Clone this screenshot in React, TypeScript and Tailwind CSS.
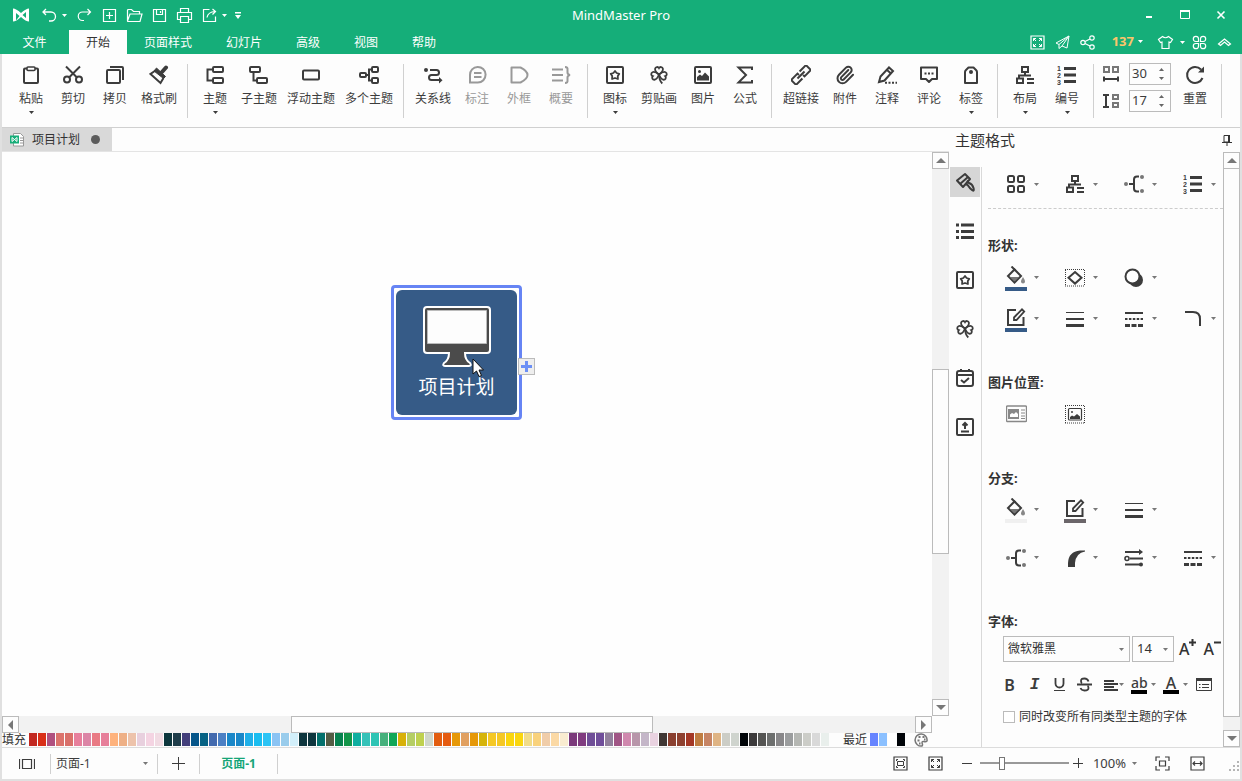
import React, { useState } from 'react';
import { Paperclip } from 'lucide-react';

type DrawProps = { children?: React.ReactNode; size?: number; sw?: number; className?: string };

function Svg({ children, size = 20, sw = 2, className = '' }: DrawProps) {
  return (
    <svg
      width={size}
      height={size}
      viewBox={`0 0 ${size} ${size}`}
      fill="none"
      stroke="currentColor"
      strokeWidth={sw}
      className={`shrink-0 ${className}`}
      aria-hidden="true"
    >
      {children}
    </svg>
  );
}

function Caret({ className = '' }: { className?: string }) {
  return (
    <svg width="5" height="3" viewBox="0 0 5 3" fill="currentColor" className={`shrink-0 ${className}`} aria-hidden="true">
      <path d="M0 0h5L2.5 3z" />
    </svg>
  );
}

/* Icons shared by the ribbon and the side panel */
const StarBox = () => (
  <Svg>
    <rect x="2" y="2" width="16" height="16" rx="1" />
    <path d="M10 6l1.600 2 2.700.8-1.500 2.300.1 2.900-2.900-1-2.900 1 .1-2.900-1.500-2.300 2.700-.8z" strokeWidth="1.8" strokeLinejoin="round" />
  </Svg>
);

const leaf = 'M10 9.5C7.5 7.6 5.8 5.5 6.1 3.8 6.5 1.8 9 1.4 10 3.1 11 1.4 13.5 1.8 13.9 3.8 14.2 5.5 12.5 7.6 10 9.5z';
const Clover = () => (
  <Svg sw={1.8}>
    <path d={leaf} />
    <path d={leaf} transform="rotate(-105 10 9.5)" />
    <path d={leaf} transform="rotate(105 10 9.5)" />
    <path d="M10 9.5c0 4 .7 6.5 3.3 9" />
  </Svg>
);

const Layout = () => (
  <Svg>
    <rect x="7" y="2" width="6" height="5" />
    <path d="M10 7v3M4 14v-3.5h12" />
    <rect x="2" y="13.5" width="6" height="4.5" />
    <path d="M12 14h7M12 18h7" />
  </Svg>
);

const Numbering = () => (
  <Svg sw={3}>
    <path d="M7 3.5h12M7 10h12M7 16.5h12" />
    <g fill="currentColor" stroke="none" fontSize="7" fontWeight="700" fontFamily="Liberation Sans, sans-serif">
      <text x="0" y="6">1</text>
      <text x="0" y="13">2</text>
      <text x="0" y="20">3</text>
    </g>
  </Svg>
);

const Lines = () => (
  <Svg>
    <path d="M1 3.5h18" strokeWidth="1" />
    <path d="M1 10h18" />
    <path d="M1 16.5h18" strokeWidth="3" />
  </Svg>
);

const Dashes = () => (
  <Svg>
    <path d="M1 4h18" />
    <path d="M1 10h18" strokeDasharray="2.5 1.4" />
    <path d="M1 16.5h18" strokeWidth="3" strokeDasharray="5 1.5" />
  </Svg>
);

const Branch = () => (
  <Svg>
    <path d="M5 10h5M15 2.5h-2q-3 0-3 3v9q0 3 3 3h2" />
    <g fill="#777" stroke="none">
      <circle cx="2" cy="10" r="2" />
      <circle cx="18" cy="3" r="2" />
      <circle cx="18" cy="17" r="2" />
    </g>
  </Svg>
);

const Bucket = () => (
  <Svg>
    <path d="M5.5 .5l4 4" />
    <path d="M8.5 3.5L15 10l-6.5 6.5L2 10z" />
    <path d="M4 11h9l-4.5 4.5z" fill="#777" stroke="none" />
    <path d="M17 11q2 3 2 4.5a2 2 0 0 1-4 0q0-1.5 2-4.5z" fill="#888" stroke="none" />
  </Svg>
);

const EditPen = () => (
  <Svg>
    <path d="M10 3H2v15h15.5v-8" />
    <path d="M8 10.5L16 2.3l2.2 2.2L10.5 13H8z" strokeWidth="1.8" />
  </Svg>
);

const ribbon = {
  paste: (
    <Svg>
      <rect x="3" y="3.5" width="14" height="14.5" rx="1" />
      <rect x="6" y="2" width="8" height="3.5" rx="1" fill="white" strokeWidth="1.6" />
    </Svg>
  ),
  cut: (
    <Svg>
      <circle cx="4" cy="14.5" r="3" />
      <circle cx="16" cy="14.5" r="3" />
      <path d="M3 1.5L14 12.5M17 1.5L6 12.5" />
    </Svg>
  ),
  copy: (
    <Svg>
      <rect x="2" y="5" width="13" height="13" rx="1" />
      <path d="M5 2h12q1 0 1 1v12" />
    </Svg>
  ),
  brush: (
    <Svg>
      <path d="M13 7l4-4.5" strokeWidth="4" strokeLinecap="round" />
      <path d="M7.5 3l9 8.500-2 2L5 6z" fill="currentColor" strokeWidth="1" />
      <path d="M6.5 5.5L1.5 9l10 9 3-5" />
    </Svg>
  ),
  topic: (
    <Svg>
      <rect x="8" y="2" width="10" height="5" rx="1" />
      <rect x="8" y="13" width="10" height="5" rx="1" />
      <path d="M8 4.5H2.5v11H8" />
    </Svg>
  ),
  subtopic: (
    <Svg>
      <rect x="1" y="2" width="10" height="5" rx="1" />
      <rect x="8" y="13" width="10" height="5" rx="1" />
      <path d="M4.5 7v8.5H8" />
    </Svg>
  ),
  floating: (
    <Svg>
      <rect x="2" y="5.5" width="16" height="9" rx="1" />
    </Svg>
  ),
  multi: (
    <Svg>
      <rect x="1" y="8" width="6" height="4" rx="1" />
      <rect x="13" y="2" width="6" height="5" rx="1" />
      <rect x="13" y="13" width="6" height="5" rx="1" />
      <path d="M7 10h3M13 4.5h-3v11h3" />
    </Svg>
  ),
  relation: (
    <Svg>
      <circle cx="3" cy="5" r="2" fill="currentColor" stroke="none" />
      <path d="M7 5h6.5a2.5 2.5 0 0 1 0 5H8.5a2.5 2.5 0 0 0 0 5H16" />
      <path d="M16 12l3.5 3.2L16 18.4z" fill="currentColor" stroke="none" />
    </Svg>
  ),
  callout: (
    <Svg>
      <path d="M3 17.5V10a7.8 7.8 0 1 1 7.8 7.5z" />
      <path d="M7 8h7.5M7 12h7.5" />
    </Svg>
  ),
  boundary: (
    <Svg>
      <path d="M2.5 2.5h9q7 3.5 7 7.5t-7 7.5h-9z" strokeLinejoin="round" />
    </Svg>
  ),
  summary: (
    <Svg>
      <path d="M1 4.5h11M1 10h11M1 15.5h11" />
      <path d="M14 2q3 0 2.5 3v2.5q0 2 2.5 2.5-2.5.5-2.5 2.5v2.5q.5 3-2.5 3" />
    </Svg>
  ),
  picture: (
    <Svg>
      <rect x="2" y="2" width="16" height="16" rx="1" />
      <circle cx="6.5" cy="6.5" r="1.5" fill="currentColor" stroke="none" />
      <path d="M4 15.5V12l3-2.5 2 1.500 3-3.500 4 4v4z" fill="currentColor" stroke="none" />
    </Svg>
  ),
  formula: (
    <Svg>
      <path d="M17 5V2.5H3.5L11 10l-7.5 7.5H17V15" />
    </Svg>
  ),
  link: (
    <Svg>
      <g transform="rotate(-45 10 10)">
        <path d="M8.5 8.500v-2H-.5v7h9M11.5 11.500v2h9v-7h-9M5 10h10" />
      </g>
    </Svg>
  ),
  attach: <Paperclip size={20} strokeWidth={2.4} aria-hidden="true" />,
  note: (
    <Svg>
      <path d="M2 17l1.5-5.5L12 2.5l4 3.5-8.500 9.500zM10 5l4 3.500" />
      <path d="M8 17.8h12" strokeDasharray="2 1.5" />
    </Svg>
  ),
  comment: (
    <Svg>
      <path d="M2 2.5h16V14h-5l-3 3-3-3H2z" strokeLinejoin="round" />
      <path d="M5.5 8.5h9" strokeDasharray="2 1.5" />
    </Svg>
  ),
  tag: (
    <Svg>
      <path d="M4 18V7q0-1 1-2l2.5-2.5h5L15 5q1 1 1 2v11z" strokeLinejoin="round" />
      <circle cx="10" cy="7" r="2" fill="currentColor" stroke="none" />
    </Svg>
  ),
};

type Tool = { label: string; icon: React.ReactNode; caret?: boolean; off?: boolean };

const groups: Tool[][] = [
  [
    { label: '粘贴', icon: ribbon.paste, caret: true },
    { label: '剪切', icon: ribbon.cut },
    { label: '拷贝', icon: ribbon.copy },
    { label: '格式刷', icon: ribbon.brush },
  ],
  [
    { label: '主题', icon: ribbon.topic, caret: true },
    { label: '子主题', icon: ribbon.subtopic },
    { label: '浮动主题', icon: ribbon.floating },
    { label: '多个主题', icon: ribbon.multi },
  ],
  [
    { label: '关系线', icon: ribbon.relation },
    { label: '标注', icon: ribbon.callout, off: true },
    { label: '外框', icon: ribbon.boundary, off: true },
    { label: '概要', icon: ribbon.summary, off: true },
  ],
  [
    { label: '图标', icon: <StarBox />, caret: true },
    { label: '剪贴画', icon: <Clover /> },
    { label: '图片', icon: ribbon.picture },
    { label: '公式', icon: ribbon.formula },
  ],
  [
    { label: '超链接', icon: ribbon.link },
    { label: '附件', icon: ribbon.attach },
    { label: '注释', icon: ribbon.note },
    { label: '评论', icon: ribbon.comment },
    { label: '标签', icon: ribbon.tag, caret: true },
  ],
  [
    { label: '布局', icon: <Layout />, caret: true },
    { label: '编号', icon: <Numbering />, caret: true },
  ],
];

const toolWidth: Record<number, string> = { 2: 'w-[42px]', 3: 'w-[46px]', 4: 'w-[58px]' };

function RibbonButton({ label, icon, caret, off }: Tool) {
  return (
    <button
      disabled={off}
      className={`flex shrink-0 flex-col items-center pt-[11px] ${toolWidth[label.length]} ${off ? 'text-[#999]' : 'text-[#3c3c3c]'}`}
    >
      {icon}
      <span className="mt-1 text-xs leading-5 whitespace-nowrap">{label}</span>
      {caret && <Caret className="mt-0.5" />}
    </button>
  );
}

const Divider = () => <div className="mt-2.5 mr-1.5 ml-[5px] h-[54px] w-px shrink-0 bg-[#d0d0d0]" />;

function Spinner({ label, value, children }: { label: string; value: number; children: React.ReactNode }) {
  return (
    <label className="flex items-center gap-2.5">
      {children}
      <span className="flex h-[22px] w-[42px] items-center border border-[#bbb] pr-1.5">
        <input
          type="number"
          aria-label={label}
          defaultValue={value}
          className="w-full min-w-0 [appearance:textfield] pl-0.5 text-[13px] outline-none [&::-webkit-inner-spin-button]:appearance-none"
        />
        <span className="flex flex-col gap-1.5 text-[#666]">
          <Caret className="rotate-180" />
          <Caret />
        </span>
      </span>
    </label>
  );
}

function TitleBar() {
  const quick = [
    { name: '重做', draw: <path d="M11.5 2l3 3-3 3M14 5H6.5a4 4 0 0 0 0 8.5H8" /> },
    { name: '新建', draw: <path d="M2.5 2.5h12v12h-12zM8.5 5v7M5 8.5h7" /> },
    { name: '打开', draw: <path d="M1.5 14V3.5q0-1 1-1h3l2 2h6V7M1.5 14L4 7h12l-2 7.5H2.5q-1 0-1-.5" /> },
    { name: '保存', draw: <path d="M2.5 2.5h12v12h-12zM5.5 2.5v5h6v-5M9.5 4v2" /> },
    { name: '打印', draw: <path d="M4.5 5.5v-4h8v4M4.5 12.5h-3v-7h14v7h-3M4.5 9.5h8v6h-8z" /> },
    { name: '导出', draw: <path d="M8.5 2.5h-6v12h12v-5M6 10.5Q7 5 14 4.5M11.5 2l3 2.500-3 3" /> },
  ];
  return (
    <div className="grid h-[30px] grid-cols-[1fr_auto_1fr] items-center">
      <div className="flex items-center pl-[13px]">
        <svg width="16" height="14" viewBox="0 0 16 14" fill="currentColor" aria-hidden="true">
          <path d="M0 .5Q3 .5 8 5 13 .5 16 .5v13q-3 0-8-4.500Q3 13.500 0 13.500z" />
          <path d="M3 5v7.500l3.500-4.500zM13 4v6l-3.500-3z" fill="#15ae79" />
        </svg>
        <button className="ml-2 flex w-6 justify-center" aria-label="撤销">
          <Svg size={17} sw={1.3}>
            <path d="M5 2L2 5l3 3M2.5 5H10a4.5 4.5 0 0 1 0 9H8" />
          </Svg>
        </button>
        <Caret className="mr-[5px] ml-px" />
        {quick.map((q) => (
          <button key={q.name} className="flex w-[25px] justify-center" aria-label={q.name}>
            <Svg size={17} sw={1.2}>{q.draw}</Svg>
          </button>
        ))}
        <Caret />
        <svg width="6" height="7" viewBox="0 0 6 7" fill="currentColor" className="ml-2" aria-hidden="true">
          <path d="M0 0h6v1.5H0zM0 3h6L3 7z" />
        </svg>
      </div>
      <h1 className="pt-0.5 text-[13px]">MindMaster Pro</h1>
      <div className="flex justify-end pr-[3px]">
        <button className="flex w-9 justify-center" aria-label="最小化">
          <Svg size={12}><path d="M3 8h6" /></Svg>
        </button>
        <button className="flex w-9 justify-center" aria-label="最大化">
          <Svg size={12} sw={1}>
            <path d="M1.5 2v7.5h9V2" />
            <path d="M1 2h10" strokeWidth="2" />
          </Svg>
        </button>
        <button className="flex w-9 justify-center" aria-label="关闭">
          <Svg size={12} sw={1.6}><path d="M2.5 2.5l7 7M9.5 2.5l-7 7" /></Svg>
        </button>
      </div>
    </div>
  );
}

function MenuBar() {
  const [active, setActive] = useState('开始');
  const tabs = ['开始', '页面样式', '幻灯片', '高级', '视图', '帮助'];
  return (
    <div className="flex h-6 items-stretch justify-between text-xs">
      <nav className="flex items-stretch">
        <button className="w-[69px] pt-0.5">文件</button>
        {tabs.map((tab) => (
          <button
            key={tab}
            onClick={() => setActive(tab)}
            className={`px-[17px] pt-0.5 ${tab === active ? 'bg-[#fdfdfd] text-[#333]' : ''}`}
          >
            {tab}
          </button>
        ))}
      </nav>
      <div className="flex items-center pr-[5px]">
        <button className="flex w-[25px] justify-center" aria-label="全屏">
          <Svg size={15} sw={1.2}>
            <path d="M1 1h13v13H1z" />
            <path d="M3.5 6V3.5H6M3.5 3.5L6 6M9 3.5h2.5V6M11.5 3.5L9 6M3.5 9v2.5H6M3.5 11.5L6 9M9 11.5h2.5V9M11.5 11.5L9 9" strokeWidth="1" />
          </Svg>
        </button>
        <button className="flex w-[25px] justify-center" aria-label="发送">
          <Svg size={15} sw={1}>
            <path d="M14 1L1 8l3 1.5v4L7 11M14 1L4 9.5M14 1l-2 12-5-2L14 1" />
          </Svg>
        </button>
        <button className="flex w-[25px] justify-center" aria-label="分享">
          <Svg size={15} sw={1.2}>
            <circle cx="3" cy="7.5" r="2.2" />
            <circle cx="12" cy="3" r="2.2" />
            <circle cx="12" cy="12" r="2.2" />
            <path d="M5 6.5L10 4M5 8.5l5 2.500" />
          </Svg>
        </button>
        <button className="ml-3 flex items-center gap-1 text-[13px] font-bold text-[#fbc56b]">
          137 <Caret className="text-white" />
        </button>
        <button className="ml-3.5 flex items-center gap-1.5" aria-label="主题皮肤">
          <Svg size={17} sw={1.2}>
            <path d="M5.5 2.5q3 2.5 6 0l4 3-2 3-1.500-.5v6.500H5V8l-1.500.5-2-3z" />
          </Svg>
          <Caret />
        </button>
        <button className="ml-0.5 flex w-[25px] justify-center" aria-label="应用">
          <Svg size={15} sw={1.2}>
            <path d="M6.5 6.5H3.8a2.6 2.6 0 1 1 2.7-2.7zM8.5 6.5h2.7a2.6 2.6 0 1 0-2.7-2.7zM6.5 8.5H3.8a2.6 2.6 0 1 0 2.7 2.7zM8.5 8.5h2.7a2.6 2.6 0 1 1-2.7 2.7z" />
          </Svg>
        </button>
        <button className="flex w-[25px] justify-center" aria-label="收起功能区">
          <Svg size={15} sw={1.2}>
            <path d="M1.5 9l6-5 6 5-2 1.5-4-3.500-4 3.500z" />
          </Svg>
        </button>
      </div>
    </div>
  );
}

function Ribbon() {
  return (
    <section className="flex h-[74px] items-start overflow-hidden border-b border-[#d0d0d0] pl-2 text-[#3c3c3c]">
      {groups.map((group, i) => (
        <React.Fragment key={i}>
          {i > 0 && <Divider />}
          {group.map((tool) => (
            <RibbonButton key={tool.label} {...tool} />
          ))}
        </React.Fragment>
      ))}
      <Divider />
      <div className="flex flex-col gap-[5px] pt-[9px] pl-[3px]">
        <Spinner label="水平间距" value={30}>
          <Svg size={16}>
            <path d="M1 1h5v5H1zM10 1h5v5h-5z" stroke="#777" />
            <path d="M0 13h16M1 10.5v5M15 10.5v5" />
          </Svg>
        </Spinner>
        <Spinner label="垂直间距" value={17}>
          <Svg size={16}>
            <path d="M3 2v12M0 2h6M0 14h6" />
            <path d="M10 2h5v4h-5zM10 10h5v4h-5z" stroke="#777" />
          </Svg>
        </Spinner>
      </div>
      <button className="ml-[3px] flex w-[42px] flex-col items-center pt-[11px]">
        <Svg>
          <path d="M16 4.5A8 8 0 1 0 17.5 13" />
          <path d="M19 1.5v6h-6z" fill="currentColor" stroke="none" />
        </Svg>
        <span className="mt-1 text-xs leading-5">重置</span>
      </button>
      <Divider />
    </section>
  );
}

const scrollArrow = {
  up: 'M0 5h10L5 0z',
  down: 'M0 0h10L5 5z',
  left: 'M5 0v10L0 5z',
  right: 'M0 0v10l5-5z',
};

function ScrollButton({ dir }: { dir: keyof typeof scrollArrow }) {
  const flat = dir === 'up' || dir === 'down';
  return (
    <button aria-label={`scroll ${dir}`} className="flex size-[17px] shrink-0 items-center justify-center border border-[#bbb] bg-[#fdfdfd] text-[#777]">
      <svg width={flat ? 10 : 5} height={flat ? 5 : 10} fill="currentColor" aria-hidden="true">
        <path d={scrollArrow[dir]} />
      </svg>
    </button>
  );
}

function MapNode() {
  return (
    <div className="absolute top-[133px] left-[389px] rounded border-[3px] border-[#6684f4] bg-white p-0.5">
      <div className="flex h-[125px] w-[121px] flex-col items-center rounded-md bg-[#365b87] pt-[15px] text-white">
        <svg width="70" height="64" viewBox="0 0 70 64" aria-hidden="true">
          <path
            d="M5 2h60q3 0 3 3v40q0 3-3 3H43q0 7 5 10 2 3-1 3H23q-3 0-1-3 5-3 5-10H5q-3 0-3-3V5q0-3 3-3z"
            fill="#4b4b4b"
            stroke="white"
            strokeWidth="2"
          />
          <path d="M5.5 5.5h59v33h-59z" fill="#fdfdfd" stroke="#bbb" />
        </svg>
        <span className="mt-1 text-[19px] leading-7">项目计划</span>
      </div>
      <button
        aria-label="添加子主题"
        className="absolute top-[70px] -right-4 flex size-[17px] items-center justify-center border border-[#bbb] bg-[#eee] text-[#6b8ff5]"
      >
        <Svg size={11} sw={3}>
          <path d="M5.5 0v11M0 5.5h11" />
        </Svg>
      </button>
      <svg width="13" height="20" viewBox="0 0 13 20" className="absolute top-[70px] left-[78px]" aria-hidden="true">
        <path d="M1 1v15l3.5-3 2.500 5.500 2.500-1L7 12h4.500z" fill="white" stroke="#111" />
      </svg>
    </div>
  );
}

const swatches = [
  '#c22820', '#d92f18', '#b0507f', '#dc736c', '#d9706a', '#e77f9c', '#dc85a6', '#e97a84', '#e77f9a', '#feb27c',
  '#eeb086', '#edc3ab', '#e8d0de', '#f4d4e2', '#f1dbe3', '#0d363d', '#1f3d4a', '#433f7b', '#06568a', '#066284',
  '#436aae', '#4c80c4', '#1a87c8', '#1a87c8', '#1fb0e9', '#19bdf0', '#2cc4f5', '#8bc4f4', '#99ccec', '#d2effa',
  '#0e363e', '#0e363e', '#03706c', '#535c44', '#07824f', '#129549', '#0faea0', '#35c2b8', '#2dc4b4', '#46b07c',
  '#10a657', '#d8b109', '#b5ce64', '#bfd14f', '#d0d7ca', '#e25d10', '#e55b10', '#e69808', '#e1a060', '#e69808',
  '#d6b40a', '#f5c825', '#f5c825', '#fad60e', '#fad60e', '#f1dc88', '#f9d27c', '#f0cda9', '#fbd9a5', '#f9ecd0',
  '#7b3a7b', '#803c80', '#6f4e97', '#704e9a', '#92809c', '#a05585', '#d088ae', '#b896aa', '#c4b6c8', '#e9d2e0',
  '#403734', '#8b4030', '#8f4130', '#a43826', '#bf7d42', '#c68464', '#dfb484', '#cccdc6', '#cfd4ce', '#000408',
  '#3c3a3b', '#555553', '#6d6f6e', '#888789', '#9b9d9e', '#b5b7b3', '#cccdc8', '#d9d9d9', '#e9efec',
];

function ColorBar() {
  return (
    <div className="flex h-3.5 items-start text-xs leading-[14px] text-[#333]">
      <span className="mr-[3px] shrink-0">填充</span>
      <div className="flex shrink-0 gap-px">
        {swatches.map((color, i) => (
          <button key={i} aria-label={color} className="h-[13px] w-2" style={{ backgroundColor: color }} />
        ))}
      </div>
      <span className="mr-[3px] ml-3.5 shrink-0">最近</span>
      <div className="flex shrink-0 gap-px">
        {['#6684ff', '#8bc0ff', '#ffffff', '#000408'].map((color) => (
          <button key={color} aria-label={color} className="h-[13px] w-2" style={{ backgroundColor: color }} />
        ))}
      </div>
      <button className="ml-[9px] text-[#777]" aria-label="更多颜色">
        <Svg size={14} sw={1.5}>
          <path d="M8 13a6 6 0 1 1 5-5q-1 1-3 .5T8 10q1 2 0 3z" />
          <path d="M3.5 7.5h2M4.5 4h2M8.5 4h2M10 6.5h1.5M5 10.5h1.5" strokeWidth="2" />
        </Svg>
      </button>
    </div>
  );
}

function Workspace() {
  return (
    <main className="flex min-w-0 flex-1 flex-col">
      <div className="flex h-6 items-stretch border-b border-[#e4e4e4]">
        <button className="flex items-center bg-[#d9d9d9] pr-3 pl-2 text-xs text-[#333]">
          <svg width="14" height="15" viewBox="0 0 14 15" aria-hidden="true">
            <path d="M3.5 1.5h7l3 3V14h-10z" fill="white" stroke="#999" />
            <path d="M10 6h3M10 8.5h3M10 11h3" stroke="#999" />
            <path d="M0 3.5h9v8H0z" fill="#15ae79" />
            <path d="M2 5.5v4l2.5-2 2.500 2v-4l-2.500 2z" fill="none" stroke="white" />
          </svg>
          <span className="ml-2">项目计划</span>
          <span className="ml-[11px] size-[9px] rounded-full bg-[#5c5c5c]" />
        </button>
      </div>
      <div className="flex flex-1">
        <div className="flex min-w-0 flex-1 flex-col">
          <div className="relative flex-1 overflow-hidden bg-[#fefefe]">
            <MapNode />
          </div>
          <div className="flex h-[17px] bg-[#f2f2f2]">
            <ScrollButton dir="left" />
            <div className="flex-[272]" />
            <div className="flex-[360] border border-[#bbb] bg-[#fdfdfd]" />
            <div className="flex-[262]" />
            <ScrollButton dir="right" />
          </div>
        </div>
        <div className="flex w-[17px] flex-col bg-[#f2f2f2]">
          <ScrollButton dir="up" />
          <div className="flex-[201]" />
          <div className="flex-[183] border border-[#bbb] bg-[#fdfdfd]" />
          <div className="flex-[146]" />
          <ScrollButton dir="down" />
          <div className="h-[17px] bg-[#fdfdfd]" />
        </div>
      </div>
      <ColorBar />
    </main>
  );
}

function Option({ name, children, caret = true, bar }: { name: string; children: React.ReactNode; caret?: boolean; bar?: string }) {
  return (
    <button aria-label={name} className="flex w-[59px] shrink-0 items-center gap-[5px] text-[#3c3c3c]">
      <span className={`flex w-[26px] flex-col items-center ${bar ? 'pt-0.5' : ''}`}>
        {children}
        {bar && <span className={`mt-px h-1 w-[22px] ${bar}`} />}
      </span>
      {caret && <Caret className="text-[#777]" />}
    </button>
  );
}

const row = 'ml-[15px] flex h-[41px] items-center';
const heading = 'h-5 text-[13px] leading-5 font-bold text-[#333]';

const sideIcons = [
  {
    name: '主题格式',
    icon: (
      <Svg>
        <path d="M10 2l5 5-7 8-6-6.5z" strokeLinejoin="round" />
        <path d="M5 12l8-7M13 8.5q-1 2 1 2.5 3.5 1 4.5 5t-1.500 2-4-4.500q-1-1.500-2.500-.5" />
      </Svg>
    ),
  },
  {
    name: '大纲',
    icon: (
      <Svg sw={3}>
        <path d="M6 4h13M6 10.5h13M6 16.5h13M1 4h3M1 10.5h3M1 16.5h3" />
      </Svg>
    ),
  },
  { name: '图标', icon: <StarBox /> },
  { name: '剪贴画', icon: <Clover /> },
  {
    name: '任务',
    icon: (
      <Svg>
        <rect x="2" y="3" width="16" height="15" rx="2" />
        <path d="M2 7h16M6 1v3M14 1v3M6 12l3 2.5 5-4.500" />
      </Svg>
    ),
  },
  {
    name: '导出',
    icon: (
      <Svg>
        <rect x="2" y="2" width="16" height="16" rx="1" />
        <path d="M6 14.5h8M10 12V7M7.5 8.5L10 6l2.5 2.5" />
      </Svg>
    ),
  },
];

function FontControls() {
  return (
    <>
      <div className="mt-[5px] ml-[15px] flex items-center gap-0.5">
        <span className="relative flex h-[26px] w-[127px] shrink-0 items-center border border-[#bbb]">
          <select aria-label="字体" className="w-full appearance-none pl-1 text-xs outline-none">
            <option>微软雅黑</option>
          </select>
          <Caret className="pointer-events-none absolute right-[5px] text-[#777]" />
        </span>
        <span className="relative flex h-[26px] w-[42px] shrink-0 items-center border border-[#bbb]">
          <select aria-label="字号" className="w-full appearance-none pl-1 text-[13px] outline-none">
            <option>14</option>
          </select>
          <Caret className="pointer-events-none absolute right-[5px] text-[#777]" />
        </span>
        <button aria-label="增大字号" className="ml-[3px] flex text-base leading-5 font-medium">
          A<Svg size={7}><path d="M3.5 0v7M0 3.5h7" /></Svg>
        </button>
        <button aria-label="减小字号" className="ml-[5px] flex text-base leading-5 font-medium">
          A<Svg size={7}><path d="M0 3.5h7" /></Svg>
        </button>
      </div>
      <div className="ml-[15px] flex h-[45px] items-center text-[#3c3c3c]">
        <button className="w-[13px] text-base font-semibold">B</button>
        <button className="ml-3 w-[13px] font-mono text-base font-bold italic">I</button>
        <button className="ml-3 flex w-[13px] justify-center" aria-label="下划线">
          <Svg size={13} sw={1.8}>
            <path d="M2.5 0v5.5a4 4 0 0 0 8 0V0" />
            <path d="M1 12.5h11" strokeWidth="1" />
          </Svg>
        </button>
        <button className="ml-[11px] flex w-[15px] justify-center" aria-label="删除线">
          <Svg size={15} sw={1.8}>
            <path d="M11.5 4.5q-1-3-4-3Q4 1.5 4 4q0 1.500 1 2M3.5 11q1 2.500 4 2.500 4 0 4-2.500 0-1.500-1-2M0 7.500h15" />
          </Svg>
        </button>
        <button className="ml-3 flex items-center gap-px" aria-label="对齐">
          <Svg size={14}><path d="M0 3h10M0 6h14M0 9h10M0 12h14" /></Svg>
          <Caret className="text-[#777]" />
        </button>
        <button className="ml-[7px] flex items-center gap-1" aria-label="突出显示">
          <span className="w-4 border-b-4 border-black text-sm leading-[14px] font-medium">ab</span>
          <Caret className="text-[#777]" />
        </button>
        <button className="ml-[7px] flex items-center gap-1" aria-label="字体颜色">
          <span className="w-4 border-b-4 border-black text-base leading-[14px] font-medium">A</span>
          <Caret className="text-[#777]" />
        </button>
        <button className="ml-2" aria-label="更多字体设置">
          <Svg size={16} sw={1}>
            <path d="M.5 2.5h15v11H.5z" />
            <path d="M0 2.500h16" strokeWidth="3" />
            <path d="M3 7.5h1.5M6 7.5h7M3 10.5h1.5M6 10.5h7" />
          </Svg>
        </button>
      </div>
      <label className="ml-[15px] flex h-5 items-center gap-1 text-xs whitespace-nowrap">
        <input type="checkbox" className="size-3 appearance-none border border-[#bbb] bg-white checked:bg-[#15ae79]" />
        同时改变所有同类型主题的字体
      </label>
    </>
  );
}

function FormatPanel() {
  return (
    <aside className="flex w-[291px] shrink-0 flex-col text-[#333]">
      <header className="flex h-6 items-center justify-between pr-2 pl-1.5">
        <h2 className="text-[15px]">主题格式</h2>
        <button aria-label="固定面板">
          <Svg size={11} sw={1}>
            <path d="M3 .5h5.5V7H3zM1 7.5h10M6 8v3" />
            <path d="M8 0v7" strokeWidth="2" />
          </Svg>
        </button>
      </header>
      <div className="flex flex-1">
        <nav className="flex w-8 shrink-0 flex-col gap-[19px] pt-[15px] pl-px">
          {sideIcons.map((item, i) => (
            <button
              key={item.name}
              aria-label={item.name}
              className={`flex size-[30px] items-center justify-center text-[#3c3c3c] ${i === 0 ? 'bg-[#d6d6d6]' : ''}`}
            >
              {item.icon}
            </button>
          ))}
        </nav>
        <div className="mt-[15px] w-px bg-[#d9d9d9]" />
        <div className="min-w-0 flex-1 overflow-hidden pl-1.5">
          <div className="mt-2 flex h-12 items-center pl-[15px]">
            <Option name="主题样式">
              <Svg>
                <rect x="2" y="2" width="6" height="6" rx="1.5" />
                <rect x="12" y="2" width="6" height="6" rx="1.5" />
                <rect x="2" y="12" width="6" height="6" rx="1.5" />
                <rect x="12" y="12" width="6" height="6" rx="1.5" />
              </Svg>
            </Option>
            <Option name="布局"><Layout /></Option>
            <Option name="连接"><Branch /></Option>
            <Option name="编号"><Numbering /></Option>
          </div>
          <div className="border-t border-dashed border-[#ccc]" />
          <h3 className={`mt-[26px] ${heading}`}>形状:</h3>
          <div className={`mt-0.5 ${row}`}>
            <Option name="填充颜色" bar="bg-[#365b87]"><Bucket /></Option>
            <Option name="形状">
              <Svg>
                <path d="M0 1.5h20M0 18h20M.5 2v16M19.5 2v16" strokeWidth="1" strokeDasharray="1 1" />
                <path d="M10 4l6.5 5.8-6.500 5.800-6.500-5.800z" />
              </Svg>
            </Option>
            <Option name="阴影">
              <Svg>
                <circle cx="12" cy="12" r="7" fill="currentColor" stroke="none" />
                <circle cx="8.5" cy="8.5" r="7" fill="white" />
              </Svg>
            </Option>
          </div>
          <div className={row}>
            <Option name="线条颜色" bar="bg-[#365b87]"><EditPen /></Option>
            <Option name="线宽"><Lines /></Option>
            <Option name="线型"><Dashes /></Option>
            <Option name="圆角">
              <Svg><path d="M2 3h8q7 0 7 7v7" /></Svg>
            </Option>
          </div>
          <h3 className={`mt-[33px] ${heading}`}>图片位置:</h3>
          <div className={`mt-px ${row}`}>
            <Option name="图片居左" caret={false}>
              <svg width="21" height="18" viewBox="0 0 21 18" fill="none" stroke="#888" aria-hidden="true">
                <rect x=".5" y="1" width="20" height="15.5" rx="1" strokeWidth="1.4" />
                <path d="M2 4h11v10H2z" fill="#888" stroke="none" />
                <path d="M4 12V9.5L6 8l2 1 2-2 2 2v3z" fill="white" stroke="none" />
                <path d="M15 5h4M15 8h4M15 11h4M15 13.5h4" />
              </svg>
            </Option>
            <Option name="图片居中" caret={false}>
              <Svg>
                <path d="M0 1.5h20M0 19h20M.5 2v17M19.5 2v17" strokeWidth="1" strokeDasharray="1 1" />
                <rect x="3.5" y="4.5" width="13" height="11.5" rx="1" strokeWidth="1.2" />
                <path d="M5 15v-2l2-1.5 2 1 3-2.500 3 2.500V15z" fill="currentColor" stroke="none" />
                <circle cx="7" cy="8" r="1" fill="currentColor" stroke="none" />
              </Svg>
            </Option>
          </div>
          <h3 className={`mt-[34px] ${heading}`}>分支:</h3>
          <div className={`mt-px ${row}`}>
            <Option name="分支填充" bar="bg-[#f0f0f0]"><Bucket /></Option>
            <Option name="分支颜色" bar="bg-[#6b666a]"><EditPen /></Option>
            <Option name="分支线宽"><Lines /></Option>
          </div>
          <div className={`mt-[7px] ${row}`}>
            <Option name="连接线样式"><Branch /></Option>
            <Option name="线条粗细">
              <Svg>
                <path d="M3 19v-4Q3.5 3.500 15 2.500h5v1Q11 5 10 15v4z" fill="currentColor" stroke="none" />
              </Svg>
            </Option>
            <Option name="箭头">
              <Svg>
                <path d="M1 4h16M6 10.5h13M1 16.5h15" />
                <circle cx="3" cy="10.5" r="2" strokeWidth="1.6" />
                <path d="M15 1l4 3-4 3z" fill="currentColor" stroke="none" />
                <circle cx="17" cy="16.5" r="2" fill="currentColor" stroke="none" />
              </Svg>
            </Option>
            <Option name="分支线型"><Dashes /></Option>
          </div>
          <h3 className={`mt-[33px] ${heading}`}>字体:</h3>
          <FontControls />
        </div>
        <div className="flex w-[17px] shrink-0 flex-col bg-[#f2f2f2]">
          <ScrollButton dir="up" />
          <div className="flex-[548] border border-t-0 border-[#bbb] bg-[#fdfdfd]" />
          <div className="flex-[13]" />
          <ScrollButton dir="down" />
        </div>
      </div>
    </aside>
  );
}

function StatusBar() {
  const bar = 'h-5 w-px bg-[#d0d0d0]';
  return (
    <footer className="flex h-8 items-center border-t border-[#dcdcdc] text-xs text-[#3c3c3c]">
      <button className="ml-[17px]" aria-label="页面列表">
        <Svg size={16} sw={1.2}>
          <path d="M3.5 3.5h9v9h-9zM.5 3v10M15.5 3v10" />
        </Svg>
      </button>
      <div className={`ml-[15px] ${bar}`} />
      <span className="relative flex w-[106px] items-center">
        <select aria-label="页面" className="w-full appearance-none pl-[5px] outline-none">
          <option>页面-1</option>
        </select>
        <Caret className="pointer-events-none absolute right-[9px] text-[#777]" />
      </span>
      <div className={bar} />
      <button className="flex w-[41px] justify-center" aria-label="新建页面">
        <Svg size={13} sw={1}><path d="M6.5 0v13M0 6.5h13" /></Svg>
      </button>
      <div className={bar} />
      <button className="w-[77px] font-bold text-[#15a578]">页面-1</button>
      <div className={bar} />
      <div className="ml-auto flex items-center">
        <button className="mr-5" aria-label="适合页面">
          <Svg size={15} sw={1}>
            <path d="M1 1h13v13H1z" strokeWidth="1.2" />
            <path d="M4.5 5.5h6v4h-6zM3.5 5V3.5H5M10 3.5h1.5V5M3.5 10v1.5H5M10 11.5h1.5V10" />
          </Svg>
        </button>
        <button className="mr-[19px]" aria-label="全屏显示">
          <Svg size={15} sw={1}>
            <path d="M1 1h13v13H1z" strokeWidth="1.2" />
            <path d="M3.5 6V3.5H6M3.5 3.5L6 6M9 3.5h2.5V6M11.5 3.5L9 6M3.5 9v2.5H6M3.5 11.5L6 9M9 11.5h2.5V9M11.5 11.5L9 9" />
          </Svg>
        </button>
        <button aria-label="缩小">
          <Svg size={10} sw={1}><path d="M0 5.5h10" /></Svg>
        </button>
        <input
          type="range"
          aria-label="缩放"
          defaultValue={23}
          className="mx-2 w-[89px] appearance-none bg-transparent [&::-webkit-slider-runnable-track]:h-0.5 [&::-webkit-slider-runnable-track]:bg-[#999] [&::-webkit-slider-thumb]:-mt-[5px] [&::-webkit-slider-thumb]:h-[13px] [&::-webkit-slider-thumb]:w-1.5 [&::-webkit-slider-thumb]:appearance-none [&::-webkit-slider-thumb]:border [&::-webkit-slider-thumb]:border-[#777] [&::-webkit-slider-thumb]:bg-white"
        />
        <button className="-ml-1" aria-label="放大">
          <Svg size={10} sw={1}><path d="M0 5.5h10M5.5 0v10" /></Svg>
        </button>
        <button className="ml-2.5 flex items-center gap-1.5 text-[13px]">
          100% <Caret className="text-[#777]" />
        </button>
        <button className="ml-[18px]" aria-label="适合窗口">
          <Svg size={15} sw={1.2}>
            <path d="M4.5 5h6v5h-6zM1 5V1h4M10 1h4v4M1 10v4h4M10 14h4v-4" />
          </Svg>
        </button>
        <button className="ml-5" aria-label="适合宽度">
          <Svg size={15} sw={1.2}>
            <path d="M1 1h13v13H1zM3 7.5h9M5 5.5l-2 2 2 2M10 5.5l2 2-2 2" />
          </Svg>
        </button>
        <svg width="11" height="11" fill="#b5b5b5" className="ml-6 self-end" aria-hidden="true">
          <path d="M8 0h2v2H8zM8 4h2v2H8zM8 8h2v2H8zM4 4h2v2H4zM4 8h2v2H4zM0 8h2v2H0z" />
        </svg>
      </div>
    </footer>
  );
}

export default function App() {
  return (
    <div className="flex min-h-screen flex-col bg-[#fdfdfd] font-['Noto_Sans','Noto_Sans_CJK_SC',sans-serif]">
      <div className="bg-[#15ae79] text-white">
        <TitleBar />
        <MenuBar />
      </div>
      <div className="flex flex-1 flex-col border-x-2 border-b-2 border-[#e0e0e0]">
        <Ribbon />
        <div className="flex flex-1">
          <Workspace />
          <FormatPanel />
        </div>
        <StatusBar />
      </div>
    </div>
  );
}
